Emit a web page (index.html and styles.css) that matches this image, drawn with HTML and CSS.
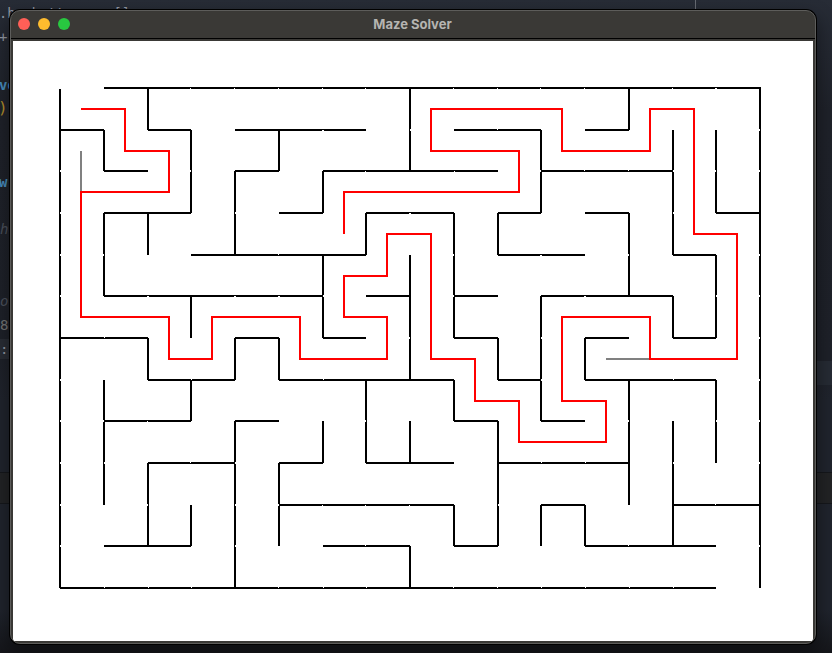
FILE: index.html
```html
<!DOCTYPE html>
<html lang="en">
<head>
<meta charset="utf-8">
<title>Maze Solver</title>
<link rel="stylesheet" href="styles.css">
</head>
<body>
<div class="desktop">
  <div class="editor">
    <span class="code code-top">.h&nbsp; b tt&nbsp; &nbsp; ..[]</span>
    <span class="code code-plus">+</span>
    <span class="code code-key">ve</span>
    <span class="code code-paren">)</span>
    <span class="code code-self">w,</span>
    <span class="code code-comment code-he">he</span>
    <span class="code code-comment code-or">or</span>
    <span class="code code-num">8</span>
    <span class="active-line"></span>
    <span class="code code-colon">:</span>
    <span class="side-line"></span>
    <span class="panel-edge"></span>
    <span class="terminal-bar"></span>
  </div>
  <main class="window">
    <header class="titlebar">
      <div class="controls"><i class="dot close"></i><i class="dot minimize"></i><i class="dot zoom"></i></div>
      <h1 class="title">Maze Solver</h1>
    </header>
    <svg class="maze" viewBox="13 41 800 600" width="800" height="600" shape-rendering="crispEdges">
      <path class="wall" d="M104 88H761 M60 130H104M148 130H191M235 130H366M454 130H541M585 130H629
        M104 171H148M235 171H279M323 171H498M541 171H673
        M104 213H191M279 213H323M366 213H454M498 213H541M585 213H629M716 213H760
        M191 255H366M498 255H585M673 255H716
        M104 296H323M366 296H410M454 296H498M541 296H673
        M60 338H148M235 338H279M323 338H366M454 338H498M585 338H629M673 338H716
        M148 380H235M279 380H454M498 380H541M585 380H716
        M104 421H191M235 421H279M454 421H498M541 421H585
        M148 463H235M279 463H323M366 463H454M498 463H629
        M279 505H454M541 505H585M673 505H760
        M104 546H191M323 546H410M454 546H498M585 546H716 M60 588H716"/>
      <path class="wall" d="M60 89V588 M104 130V171M104 213V296M104 380V505
        M148 88V130M148 213V255M148 338V380M148 463V546
        M191 130V213M191 296V338M191 380V421M191 505V546
        M235 171V255M235 338V380M235 421V588
        M279 130V171M279 338V380M279 463V546
        M323 171V213M323 255V338M323 421V463 M366 213V255M366 380V463
        M410 88V171M410 255V380M410 421V463M410 546V588
        M454 213V338M454 380V421M454 505V546
        M498 213V255M498 338V380M498 421V546
        M541 130V213M541 296V421M541 505V546 M585 338V380M585 505V546
        M629 88V130M629 213V296M629 380V505
        M673 130V255M673 296V338M673 421V546
        M716 130V213M716 255V338M716 380V463 M760 88V588"/>
      <!-- hairline gaps where neighbouring cell walls meet -->
      <path class="gap" d="M190 88.5h1M234 88.5h1M278 88.5h1M322 88.5h1M365 88.5h1M453 88.5h1M497 88.5h1M540 88.5h1M584 88.5h1M672 88.5h1M715 88.5h2
        M322 130.5h2M497 129.5h1M365 171.5h1M454 171.5h1M584 170.5h1M628 170.5h1M409 213.5h2M278 254.5h1M540 255.5h2
        M147 296.5h2M234 296.5h2M278 296.5h2M584 296.5h2M104 337.5h1M191 379.5h1M323 379.5h1M673 379.5h1M147 421.5h1
        M190 462.5h1M541 462.5h1M585 462.5h1M322 505.5h1M365 505.5h1M409 505.5h1M715 504.5h1M365 545.5h1M628 545.5h1
        M104 587.5h1M148 587.5h1M191 587.5h1M278 587.5h1M323 587.5h1M366 587.5h1M453 587.5h1M497 587.5h1M541 587.5h1M585 587.5h1M629 587.5h1M673 587.5h1"/>
      <path class="gap" d="M60.5 170v2M60.5 212v2M60.5 254v2M60.5 295v2M60.5 379v2M60.5 420v2M60.5 462v2M60.5 504v2M60.5 545v2
        M103.5 254v2M103.5 420v2M104.5 462v2M147.5 504v2M190.5 170v2M235.5 212v2M235.5 462v2M235.5 504v2M235.5 545v2
        M278.5 504v2M323.5 295v2M365.5 420v2M410.5 129v2M409.5 337v2M453.5 254v2M453.5 295v2M498.5 504v2
        M540.5 170v2M541.5 337v2M541.5 379v2M628.5 254v2M628.5 420v2M673.5 170v2M673.5 212v2M673.5 462v2
        M715.5 170v2M716.5 295v2M716.5 420v2
        M759.5 129v2M759.5 170v2M759.5 254v2M759.5 295v2M759.5 337v2M759.5 379v2M759.5 420v2M759.5 462v2M759.5 545v2"/>
      <path class="undo" d="M81 151V192M606 359H650"/>
      <path class="route" d="M81 109H125V151H169V192H81V317H169V359H212V317H300V359H387V317H344V276H387V234H431V359H475V401H519V442H606V401H562V317H650V359H737V234H694V109H650V151H562V109H431V151H519V192H344V234"/>
    </svg>
  </main>
</div>
</body>
</html>
```

FILE: styles.css
```css
* { box-sizing: border-box; }
body { margin: 0; }
.desktop {
  position: relative;
  width: 832px;
  height: 653px;
  padding: 10px;
  overflow: hidden;
  background: linear-gradient(#272c36 0, #1f222a 110px, #1e2129 360px, #20242d 400px, #20242d 610px, #15161a 653px);
}
.editor { position: absolute; inset: 0; }
.code {
  position: absolute;
  left: 0;
  font: 14px/18px "DejaVu Sans Mono", monospace;
  color: #9298a3;
  white-space: pre;
}
.code-top { top: 4px; left: -1px; font-size: 13.6px; }
.code-plus { top: 28px; left: -1px; }
.code-key { top: 76px; left: -1px; color: #478cbd; font-weight: bold; }
.code-paren { top: 99px; left: -2px; color: #b28e2c; font-size: 16px; }
.code-self { top: 173px; left: -1px; color: #478cbd; font-weight: bold; }
.code-comment { color: #4c515c; font-style: italic; }
.code-he { top: 220px; }
.code-or { top: 292px; }
.code-num { top: 316px; color: #757575; }
.active-line { position: absolute; top: 339px; left: 0; width: 12px; height: 20px; background: #292d35; }
.side-line { position: absolute; top: 361px; right: 0; width: 20px; height: 24px; background: #262b34; }
.code-colon { top: 340px; }
.panel-edge { position: absolute; left: 695px; top: 0; width: 1px; height: 10px; background: #666a72; }
.terminal-bar {
  position: absolute;
  left: 0;
  top: 472px;
  width: 100%;
  height: 32px;
  background: #222325;
  border: solid #15171b;
  border-width: 1px 0;
}
.window {
  position: relative;
  display: flex;
  flex-direction: column;
  width: 806px;
  height: 634px;
  border: 1px solid #5d5d5b;
  border-radius: 10px;
  background: #3a3936;
  box-shadow: 0 0 0 1px #000, 0 8px 18px 2px rgba(0, 0, 0, .4);
  overflow: hidden;
}
.titlebar {
  display: grid;
  grid-template-columns: 1fr auto 1fr;
  align-items: center;
  height: 28px;
  flex: none;
  padding-bottom: 2px;
  border-bottom: 1px solid #000;
}
.controls { display: flex; gap: 8px; padding-left: 7px; }
.dot { width: 12px; height: 12px; border-radius: 50%; }
.close { background: #ff5f57; }
.minimize { background: #febc2e; }
.zoom { background: #28c840; }
.title { margin: 0 1px 0 0; font: bold 13px/16px Inter, sans-serif; color: #b5b4b1; }
.maze { display: block; flex: none; margin: 2px 0 0 2px; background: #fff; }
.maze path { fill: none; }
.wall { stroke: #000; stroke-width: 2; }
.gap { stroke: #fff; stroke-width: 1; }
.undo { stroke: #808080; stroke-width: 2; }
.route { stroke: #f00; stroke-width: 2; }
```
